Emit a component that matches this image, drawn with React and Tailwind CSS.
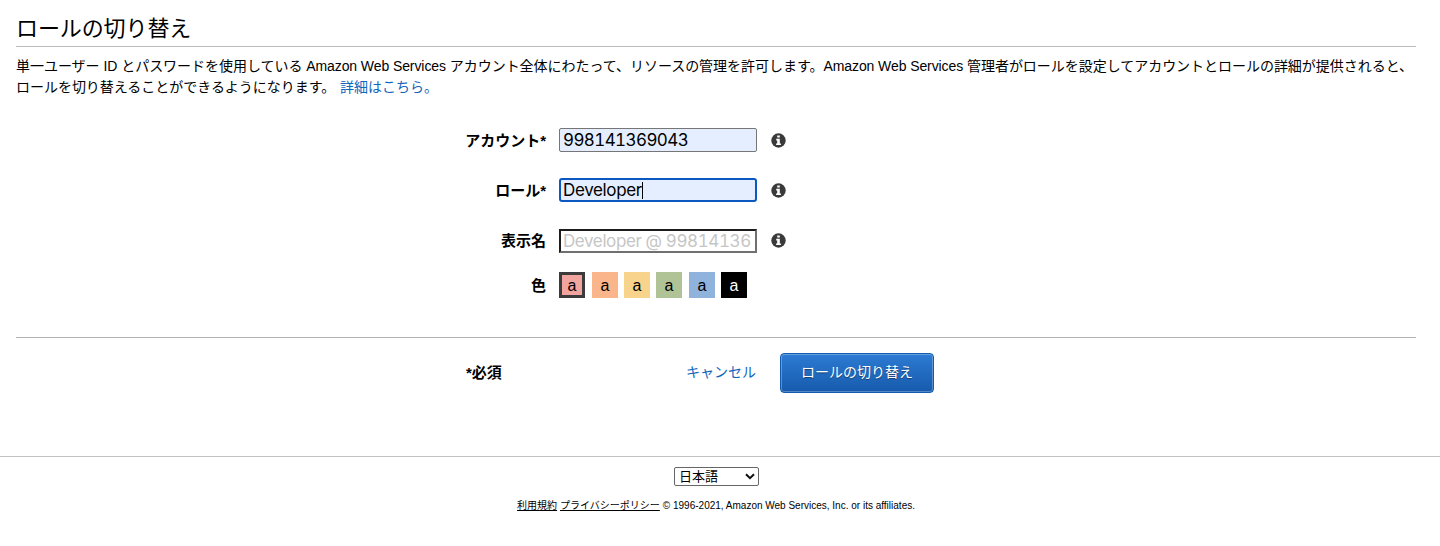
const swatches = [
  'bg-[#f2a49f] border-[3px] border-[#3c3c3c] text-black',
  'bg-[#fab58b] text-black ml-[7px] pt-0.5',
  'bg-[#f8d38b] text-black ml-[6px] pt-0.5',
  'bg-[#b0c396] text-black ml-[6px] pt-0.5',
  'bg-[#8fb3dc] text-black ml-[7px] pt-0.5',
  'bg-black text-white ml-[6px] pt-0.5',
];

function InfoIcon({ className = '' }) {
  return (
    <svg className={`ml-[14px] h-[15px] w-[15px] shrink-0 ${className}`} viewBox="0 0 15 15">
      <circle cx="7.5" cy="7.5" r="7.2" fill="#3a3a3a" />
      <path d="M6.2 2.4h2.6v2H6.2zM5.2 5.8h3.6v4.6h1.1V12H5.1v-1.6h1.1V7.4h-1z" fill="#fff" />
    </svg>
  );
}

function Row({ label, labelClass = '', className, children }) {
  return (
    <div className={`flex items-center ${className}`}>
      <div className={`mr-[13px] w-[530px] shrink-0 text-right text-[15px] font-bold leading-6 ${labelClass}`}>{label}</div>
      {children}
    </div>
  );
}

const field =
  "flex h-6 w-[198px] shrink-0 items-center overflow-hidden whitespace-nowrap text-[17px] leading-5 font-normal tabular-nums font-['Inter','Noto_Sans_CJK_JP',sans-serif]";

export default function App() {
  return (
    <div className="h-[546px] overflow-hidden bg-white text-sm text-black font-['Liberation_Sans','Noto_Sans_CJK_JP',sans-serif]">
      <main className="mr-6 ml-4">
        <h1 className="h-[47px] border-b border-[#bbb] pt-[14px] text-[22px] leading-[30px] tracking-[-0.1px]">ロールの切り替え</h1>
        <div className="h-[81px] pt-[9px] leading-[21px] whitespace-nowrap tracking-[-0.03px]">
          <p>
            単一ユーザー ID とパスワードを使用している <span className="tracking-[-0.09px]">Amazon Web Services</span> アカウント全体にわたって、リソースの管理を許可します。<span className="tracking-[-0.09px]">Amazon Web Services</span> 管理者がロールを設定してアカウントとロールの詳細が提供されると、
          </p>
          <p>
            ロールを切り替えることができるようになります。 <a className="ml-px text-[#1166bb]">詳細はこちら。</a>
          </p>
        </div>

        <form>
          <Row label="アカウント*" labelClass="pt-px" className="h-6">
            <div className={`${field} rounded-[2px] border border-[#767676] bg-[#e5eefe] pl-[3px] tracking-[-0.6px]`}>998141369043</div>
            <InfoIcon />
          </Row>
          <Row label="ロール*" labelClass="pt-px" className="mt-[26px] h-6">
            <div className={`${field} rounded-[3px] border-2 border-[#0a58c0] bg-[#e5eefe] pl-[2px] tracking-[-0.35px]`}>
              Developer
              <span className="h-[17px] w-px bg-black" />
            </div>
            <InfoIcon />
          </Row>
          <Row label="表示名" labelClass="pb-px" className="mt-[27px] h-6">
            <div className={`${field} border-2 border-t-[#1c1c1c] border-r-[#707070] border-b-[#707070] border-l-[#1c1c1c] pl-[2px] tracking-[-0.4px] text-[#c6c6c6]`}>
              Developer @ 99814136
            </div>
            <InfoIcon className="mb-0.5" />
          </Row>
          <Row label="色" labelClass="pt-px" className="mt-[19px] h-[26px]">
            {swatches.map((color) => (
              <div key={color} className={`flex h-[26px] w-[26px] shrink-0 items-center justify-center text-base leading-5 ${color}`}>
                <span className={color.includes('border') ? 'pt-0.5' : ''}>a</span>
              </div>
            ))}
          </Row>

          <div className="mt-[39px] flex h-[56px] items-end border-t border-[#b2b2b2]">
            <div className="ml-[450px] flex h-10 w-[220px] items-center pb-px text-[15px] font-bold">*必須</div>
            <a className="flex h-10 w-[94px] items-center pb-0.5 text-[#1166bb]">キャンセル</a>
            <button
              type="button"
              className="h-10 w-[154px] rounded-[4px] border border-[#125bae] bg-linear-to-b from-[#2d7bd3] to-[#165bad] pb-0.5 text-sm text-white shadow-[inset_0_0_0_1px_rgba(255,255,255,0.28)] [text-shadow:0_1px_1px_rgba(0,0,0,0.4)]"
            >
              ロールの切り替え
            </button>
          </div>
        </form>
      </main>

      <footer className="mt-[63px] flex flex-col items-center border-t border-[#c3c3c3] pt-[10px] pr-[8px]">
        <div className="ml-px flex h-[19px] w-[85px] items-center justify-between rounded-[2px] border border-[#666] pr-[3px] pl-1 text-[13px] leading-4 font-['Noto_Sans_CJK_JP',sans-serif]">
          <span className="pb-0.5">日本語</span>
          <svg className="h-[7px] w-[10px]" viewBox="0 0 10 7" fill="none" stroke="#111" strokeWidth="2">
            <path d="M1 1.2l4 4 4-4" />
          </svg>
        </div>
        <div className="mt-[12px] flex gap-[3px] text-[10px] leading-4 whitespace-nowrap">
          <a className="underline">利用規約</a>
          <a className="underline">プライバシーポリシー</a>
          <span>© 1996-2021, Amazon Web Services, Inc. or its affiliates.</span>
        </div>
      </footer>
    </div>
  );
}
